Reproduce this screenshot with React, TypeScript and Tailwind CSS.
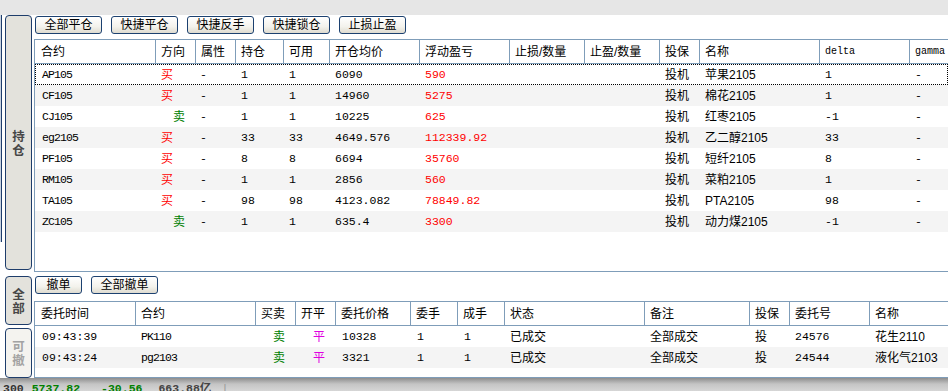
import React from "react";

const SANS = "font-['Liberation_Sans','Noto_Sans_CJK_SC',sans-serif] text-[12px]";
const NUM = "font-['Liberation_Mono','Noto_Sans_CJK_SC',monospace] text-[11.5px]";
const CODE = "font-['Liberation_Mono','Noto_Sans_CJK_SC',monospace] text-[11.5px] tracking-[-0.9px]";

const TOP_COLS =
  "grid grid-cols-[120px_40px_40px_48px_46px_90px_90px_75px_75px_40px_120px_90px_80px]";
const BOT_COLS =
  "grid grid-cols-[100px_120px_40px_40px_75px_47px_47px_140px_105px_40px_80px_120px]";

type Cell = { t: string; c?: string };

const BLACK = "text-black";
const RED = "text-[#ff0000]";
const GREEN = "text-[#008000]";
const MAG = "text-[#e000e0]";

const topHead = ["合约", "方向", "属性", "持仓", "可用", "开仓均价", "浮动盈亏", "止损/数量", "止盈/数量", "投保", "名称", "delta", "gamma"];

const positions: [string, "买" | "卖", string, string, string, string, string, string][] = [
  ["AP105", "买", "1", "1", "6090", "590", "苹果2105", "1"],
  ["CF105", "买", "1", "1", "14960", "5275", "棉花2105", "1"],
  ["CJ105", "卖", "1", "1", "10225", "625", "红枣2105", "-1"],
  ["eg2105", "买", "33", "33", "4649.576", "112339.92", "乙二醇2105", "33"],
  ["PF105", "买", "8", "8", "6694", "35760", "短纤2105", "8"],
  ["RM105", "买", "1", "1", "2856", "560", "菜粕2105", "1"],
  ["TA105", "买", "98", "98", "4123.082", "78849.82", "PTA2105", "98"],
  ["ZC105", "卖", "1", "1", "635.4", "3300", "动力煤2105", "-1"],
];

const botHead = ["委托时间", "合约", "买卖", "开平", "委托价格", "委手", "成手", "状态", "备注", "投保", "委托号", "名称"];

const orders = [
  ["09:43:39", "PK110", "10328", "24576", "花生2110"],
  ["09:43:24", "pg2103", "3321", "24544", "液化气2103"],
];

function Btn({ label, w }: { label: string; w: string }) {
  return (
    <button
      type="button"
      className={`${w} ${SANS} h-[18px] shrink-0 rounded-[3px] border border-[#1c4170] bg-[linear-gradient(#ffffff,#f3f2ec_60%,#dedbd0)] leading-none text-black`}
    >
      {label}
    </button>
  );
}

function Tab({ chars, h, dim }: { chars: string[]; h: string; dim?: boolean }) {
  return (
    <div
      className={`${h} w-[27px] rounded-[4px] border border-[#1e3d6b] flex flex-col items-center justify-center ${
        dim ? "bg-[#f4f3ef] text-[#a3a3a3]" : "bg-[#e3e2dc] text-[#474747]"
      }`}
    >
      {chars.map((ch) => (
        <span key={ch} className="block h-[14px] font-['Noto_Sans_CJK_SC',sans-serif] text-[12.5px] font-bold leading-[14px]">
          {ch}
        </span>
      ))}
    </div>
  );
}

function HeadRow({ cols, labels }: { cols: string; labels: string[] }) {
  return (
    <div className={`${cols} h-[24px] border-b border-[#7f9db9] bg-white`}>
      {labels.map((l, i) => (
        <div
          key={l}
          className={`flex items-center overflow-hidden whitespace-nowrap text-black ${
            i === 0 ? "pl-[6px]" : "border-l border-[#7f9db9] pl-[5px]"
          } ${l === "delta" || l === "gamma" ? "font-['Liberation_Mono',monospace] text-[10px]" : SANS}`}
        >
          {l}
        </div>
      ))}
    </div>
  );
}

function DataRow({ cols, cells, i, focus }: { cols: string; cells: Cell[]; i: number; focus?: boolean }) {
  return (
    <div
      className={`${cols} h-[21px] ${i % 2 ? "bg-[#f4f4f4]" : "bg-white"} ${
        focus ? "outline-1 outline-dotted outline-black -outline-offset-1" : ""
      }`}
    >
      {cells.map((c, k) => (
        <div key={k} className={`flex items-center overflow-hidden whitespace-nowrap ${c.c ?? ""}`}>
          {c.t}
        </div>
      ))}
    </div>
  );
}

export default function App() {
  return (
    <div className={`w-[948px] h-[391px] overflow-hidden bg-white flex flex-col text-black ${SANS}`}>
      <div className="h-[15px] shrink-0 bg-[#e6e6e6]" />

      <div className="flex h-[363px] shrink-0">
        {/* left tabs */}
        <div className="w-[34px] shrink-0 flex">
          <div className="w-[5px] shrink-0">
            <div className="h-[227px] w-[2px] border-r border-[#1e3d6b] bg-[#c9d3e0]" />
          </div>
          <div className="flex flex-col">
            <Tab chars={["持", "仓"]} h="h-[255px]" />
            <div className="h-[6px]" />
            <Tab chars={["全", "部"]} h="h-[49px]" />
            <div className="h-[3px]" />
            <Tab chars={["可", "撤"]} h="h-[50px]" dim />
          </div>
        </div>

        {/* main */}
        <div className="flex-1 min-w-0 flex flex-col">
          <div className="h-[24px] shrink-0 pt-[1px] pl-[1px] flex gap-[9px]">
            <Btn label="全部平仓" w="w-[67px]" />
            <Btn label="快捷平仓" w="w-[67px]" />
            <Btn label="快捷反手" w="w-[67px]" />
            <Btn label="快捷锁仓" w="w-[67px]" />
            <Btn label="止损止盈" w="w-[67px]" />
          </div>

          <div className="h-[233px] shrink-0 border-y border-l border-[#7f9db9] overflow-hidden">
            <HeadRow cols={TOP_COLS} labels={topHead} />
            {positions.map((p, i) => (
              <DataRow
                key={p[0]}
                cols={TOP_COLS}
                i={i}
                focus={i === 0}
                cells={[
                  { t: p[0], c: `${CODE} ${BLACK} pl-[7px]` },
                  { t: p[1], c: `${SANS} ${p[1] === "买" ? `${RED} pl-[6px]` : `${GREEN} pl-[18px]`}` },
                  { t: "-", c: `${NUM} ${BLACK} pl-[5px]` },
                  { t: p[2], c: `${NUM} ${BLACK} pl-[6px]` },
                  { t: p[3], c: `${NUM} ${BLACK} pl-[6px]` },
                  { t: p[4], c: `${NUM} ${BLACK} pl-[6px]` },
                  { t: p[5], c: `${NUM} ${RED} pl-[6px]` },
                  { t: "" },
                  { t: "" },
                  { t: "投机", c: `${SANS} ${BLACK} pl-[6px]` },
                  { t: p[6], c: `${SANS} ${BLACK} pl-[6px]` },
                  { t: p[7], c: `${NUM} ${BLACK} pl-[6px]` },
                  { t: "-", c: `${NUM} ${BLACK} pl-[6px]` },
                ]}
              />
            ))}
          </div>

          <div className="h-[29px] shrink-0 pt-[4px] pl-[1px] flex gap-[9px]">
            <Btn label="撤单" w="w-[47px]" />
            <Btn label="全部撤单" w="w-[67px]" />
          </div>

          <div className="h-[77px] shrink-0 border-y border-l border-[#7f9db9] overflow-hidden">
            <HeadRow cols={BOT_COLS} labels={botHead} />
            {orders.map((o, i) => (
              <DataRow
                key={o[0]}
                cols={BOT_COLS}
                i={i}
                cells={[
                  { t: o[0], c: `${NUM} ${BLACK} pl-[7px]` },
                  { t: o[1], c: `${CODE} ${BLACK} pl-[6px]` },
                  { t: "卖", c: `${SANS} ${GREEN} pl-[18px]` },
                  { t: "平", c: `${SANS} ${MAG} pl-[18px]` },
                  { t: o[2], c: `${NUM} ${BLACK} pl-[7px]` },
                  { t: "1", c: `${NUM} ${BLACK} pl-[7px]` },
                  { t: "1", c: `${NUM} ${BLACK} pl-[7px]` },
                  { t: "已成交", c: `${SANS} ${BLACK} pl-[6px]` },
                  { t: "全部成交", c: `${SANS} ${BLACK} pl-[6px]` },
                  { t: "投", c: `${SANS} ${BLACK} pl-[6px]` },
                  { t: o[3], c: `${NUM} ${BLACK} pl-[6px]` },
                  { t: o[4], c: `${SANS} ${BLACK} pl-[6px]` },
                ]}
              />
            ))}
          </div>
        </div>
      </div>

      {/* status bar */}
      <div className="h-[13px] shrink-0 overflow-hidden bg-[linear-gradient(#8e8e8e,#c4c4c4_6px,#d6d6d6)]">
        <div className={`${NUM} flex items-start pt-[4px] pl-[3px] leading-[14px] font-bold whitespace-nowrap`}>
          <span className="text-[#333]">300</span>
          <span className="ml-[8px] text-[#008000]">5737.82</span>
          <span className="ml-[21px] text-[#008000]">-30.56</span>
          <span className="ml-[16px] text-[#444]">663.88亿</span>
          <span className="ml-[10px] text-[#999] font-normal">|</span>
        </div>
      </div>
    </div>
  );
}
